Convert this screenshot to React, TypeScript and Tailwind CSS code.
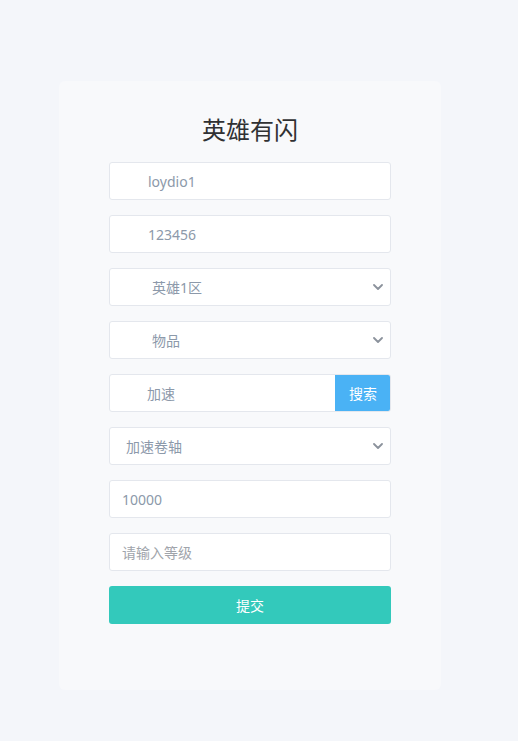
import React from "react";

const font = { fontFamily: '"Noto Sans", "Noto Sans CJK SC", sans-serif' };

function Chevron() {
  return (
    <svg width="10" height="6" viewBox="0 0 10 6" className="absolute right-[7px] top-1/2 -translate-y-1/2">
      <path d="M1 1 L5 5 L9 1" fill="none" stroke="#8b929c" strokeWidth="1.8" strokeLinecap="round" strokeLinejoin="round" />
    </svg>
  );
}

function Field({ text, pl, select, placeholder }: { text: string; pl: string; select?: boolean; placeholder?: boolean }) {
  return (
    <div className={`relative flex h-[38px] items-center rounded-[3px] border border-[#e4e7ed] bg-white ${pl}`}>
      <span className={`text-[14px] ${placeholder ? "text-[#a0a4ab]" : "text-[#8c99aa]"}`}>{text}</span>
      {select && <Chevron />}
    </div>
  );
}

export default function App() {
  return (
    <div className="min-h-[741px] w-full bg-[#f4f6fa] pt-[81px]" style={font}>
      <div className="ml-[59px] flex h-[609px] w-[382px] flex-col rounded-[6px] bg-[#f8f9fb] px-[50px] pt-[33px]">
        <h1 className="mb-[16px] text-center text-[24px] leading-[32px] text-[#303133]">
          英雄有闪
        </h1>
        <div className="flex flex-col gap-[15px]">
          <Field text="loydio1" pl="pl-[38px]" />
          <Field text="123456" pl="pl-[38px]" />
          <Field text="英雄1区" pl="pl-[42px]" select />
          <Field text="物品" pl="pl-[42px]" select />
          <div className="flex h-[38px] overflow-hidden rounded-[3px] border border-[#e4e7ed] bg-white">
            <div className="flex flex-1 items-center pl-[37px]">
              <span className="text-[14px] text-[#8c99aa]">加速</span>
            </div>
            <div className="-my-px -mr-px flex w-[56px] items-center justify-center rounded-r-[3px] bg-[#4ab2f5] text-[14px] text-white">
              搜索
            </div>
          </div>
          <Field text="加速卷轴" pl="pl-[16px]" select />
          <Field text="10000" pl="pl-[12px]" />
          <Field text="请输入等级" pl="pl-[12px]" placeholder />
          <div className="flex h-[38px] items-center justify-center rounded-[3px] bg-[#33c9bb] text-[14px] text-white">
            提交
          </div>
        </div>
      </div>
    </div>
  );
}
